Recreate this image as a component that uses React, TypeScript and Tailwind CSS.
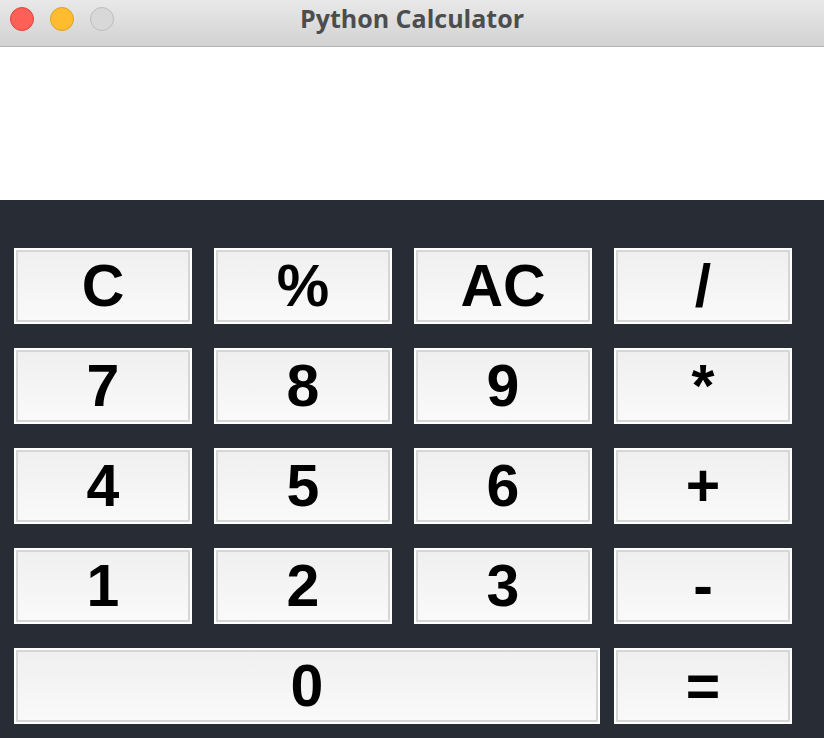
import React from 'react';

const rows = [
  ['C', '%', 'AC', '/'],
  ['7', '8', '9', '*'],
  ['4', '5', '6', '+'],
  ['1', '2', '3', '-'],
];

const Key = ({ label, wide }: { label: string; wide?: boolean }) => (
  <button
    className={`${wide ? 'w-[586px]' : 'w-[178px]'} h-[76px] border-2 border-white bg-gradient-to-b from-[#efefef] to-[#fafafa] shadow-[inset_0_0_0_2px_#d6d6d6] flex items-center justify-center text-[59px] font-bold text-black leading-none`}
    style={{ fontFamily: '"Liberation Sans", Arial, sans-serif' }}
  >
    {label}
  </button>
);

export default function App() {
  return (
    <div className="w-[824px] h-[738px] overflow-hidden bg-white flex flex-col">
      {/* title bar */}
      <div className="relative h-[47px] bg-gradient-to-b from-[#e9e9e9] to-[#d2d2d2] border-b border-[#b3b3b3] flex items-center justify-center">
        <div className="absolute left-[10px] top-[7px] flex gap-[16px]">
          <span className="w-[24px] h-[24px] rounded-full bg-[#fe5f57] border border-[#e0443e]" />
          <span className="w-[24px] h-[24px] rounded-full bg-[#febc2e] border border-[#dea123]" />
          <span className="w-[24px] h-[24px] rounded-full bg-[#d8d8d8] border border-[#bdbdbd]" />
        </div>
        <span
          className="text-[25px] font-bold text-[#4d4d4d] -mt-[9px] leading-none"
          style={{ fontFamily: '"Open Sans", "Noto Sans", sans-serif' }}
        >
          Python Calculator
        </span>
      </div>

      {/* display */}
      <div className="h-[153px] bg-white" />

      {/* keypad */}
      <div className="flex-1 bg-[#282c35] pt-[48px] pl-[14px] flex flex-col gap-[24px]">
        {rows.map((row, i) => (
          <div key={i} className="flex gap-[22px]">
            {row.map((k) => (
              <Key key={k} label={k} />
            ))}
          </div>
        ))}
        <div className="flex gap-[14px]">
          <Key label="0" wide />
          <Key label="=" />
        </div>
      </div>
    </div>
  );
}
